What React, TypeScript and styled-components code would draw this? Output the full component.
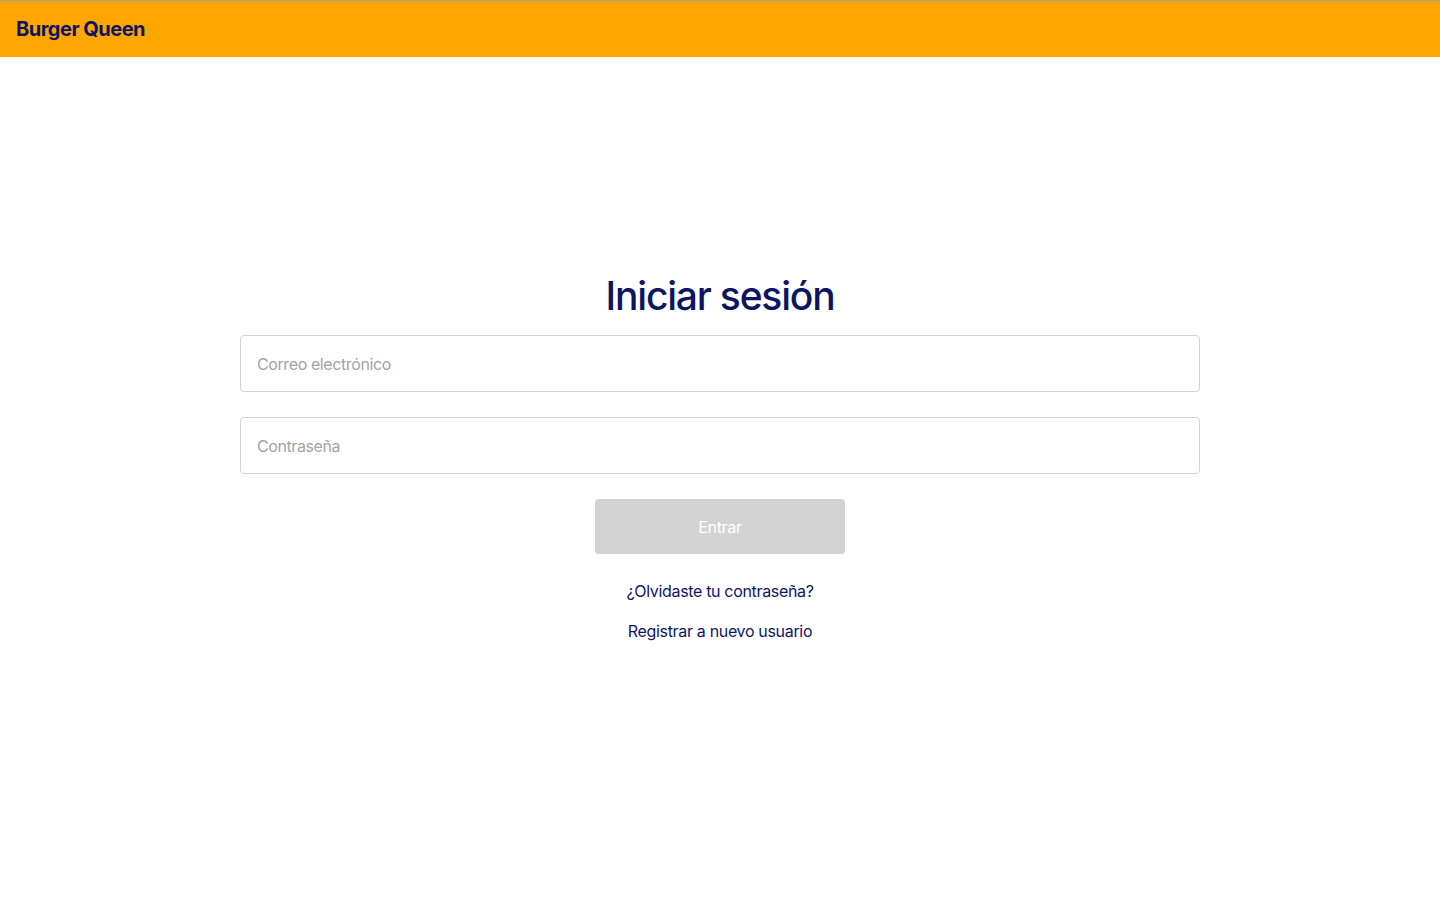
import React from "react";
import styled, { createGlobalStyle } from "styled-components";

const Global = createGlobalStyle`
  html, body { margin: 0; padding: 0; background: #ffffff; }
  body { font-family: Inter, "Noto Sans", sans-serif; }
  * { box-sizing: border-box; }
`;

const Header = styled.header`
  height: 57px;
  background: #ffa500;
  border-top: 1px solid #a0a0a0;
  display: flex;
  align-items: center;
  padding: 0 16px;
`;

const Brand = styled.h1`
  margin: 0;
  font-size: 20px;
  font-weight: 700;
  letter-spacing: -0.5px;
  color: #0d1563;
`;

const Main = styled.main`
  display: flex;
  flex-direction: column;
  align-items: center;
  padding: 215px 240px 0;
`;

const Title = styled.h2`
  margin: 0 0 15px;
  font-size: 39px;
  font-weight: 500;
  line-height: 48px;
  letter-spacing: -1.2px;
  color: #0d1563;
`;

const Form = styled.form`
  width: 100%;
  display: flex;
  flex-direction: column;
  align-items: center;
  gap: 25px;
`;

const Input = styled.input`
  width: 100%;
  height: 57px;
  border: 1px solid #d4d4d4;
  border-radius: 4px;
  padding: 0 16px;
  font-family: Inter, sans-serif;
  font-size: 16px;
  letter-spacing: -0.4px;
  color: #333;
  outline: none;
  &::placeholder { color: #a3a3a3; }
`;

const Button = styled.button`
  width: 250px;
  height: 55px;
  border: none;
  border-radius: 4px;
  background: #d3d3d3;
  color: #ffffff;
  font-family: Inter, sans-serif;
  font-size: 16px;
  letter-spacing: -0.3px;
`;

const Links = styled.div`
  display: flex;
  flex-direction: column;
  align-items: center;
  gap: 20px;
  margin-top: 27px;
`;

const Link = styled.a`
  font-size: 16px;
  line-height: 20px;
  letter-spacing: -0.33px;
  color: #0d1563;
  text-decoration: none;
  cursor: pointer;
`;

export default function App() {
  return (
    <>
      <Global />
      <Header>
        <Brand>Burger Queen</Brand>
      </Header>
      <Main>
        <Title>Iniciar sesión</Title>
        <Form onSubmit={(e) => e.preventDefault()}>
          <Input type="email" placeholder="Correo electrónico" />
          <Input type="password" placeholder="Contraseña" />
          <Button type="submit" disabled>Entrar</Button>
        </Form>
        <Links>
          <Link>¿Olvidaste tu contraseña?</Link>
          <Link>Registrar a nuevo usuario</Link>
        </Links>
      </Main>
    </>
  );
}
